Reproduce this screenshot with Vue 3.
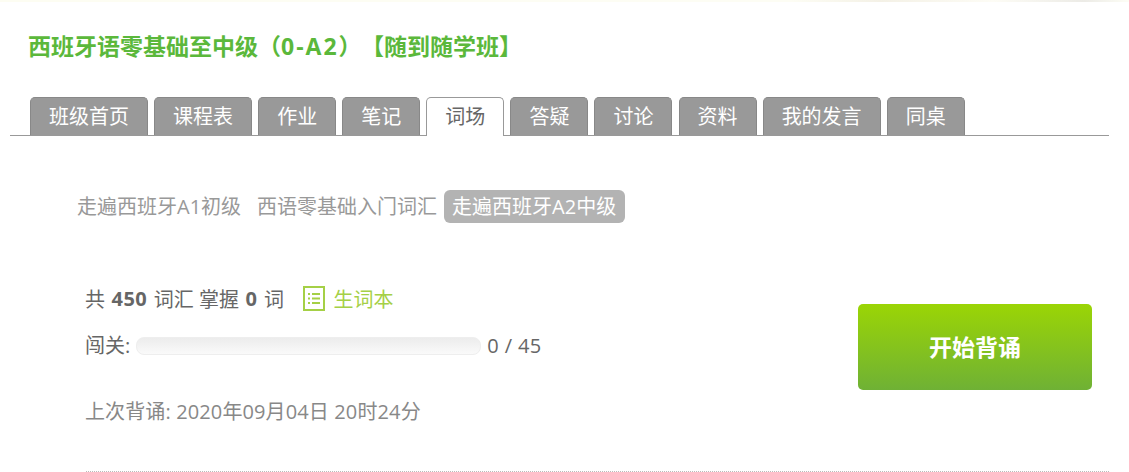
<template>
  <div class="page">
    <div class="top-strip"></div>
    <h1 class="title">西班牙语零基础至中级（<span class="latin">0-A2</span><span class="paren-end">）</span>【随到随学班】</h1>

    <ul class="tabs">
      <li
        v-for="tab in tabs"
        :key="tab"
        class="tab"
        :class="{ active: tab === currentTab }"
      >{{ tab }}</li>
    </ul>

    <div class="books">
      <span
        v-for="book in books"
        :key="book"
        class="book"
        :class="{ active: book === currentBook }"
      >{{ book }}</span>
    </div>

    <div class="summary">
      <div class="info">
        <div class="counts">
          共 <b>450</b> 词汇 掌握 <b>0</b> 词
          <a class="wordbook">
            <svg width="22" height="25" viewBox="0 0 22 25">
              <rect x="1" y="1" width="20" height="23" fill="#fff" stroke="#a5d046" stroke-width="2" />
              <path d="M5 8h2M9 8h8M5 12.5h2M9 12.5h8M5 17h2M9 17h8" stroke="#a5d046" stroke-width="2" fill="none" />
            </svg>
            生词本
          </a>
        </div>
        <div class="progress-row">
          <span>闯关:</span>
          <div class="progress"></div>
          <span class="progress-num">0 / 45</span>
        </div>
        <div class="last">上次背诵: 2020年09月04日 20时24分</div>
      </div>
      <button class="start">开始背诵</button>
    </div>
    <div class="divider"></div>
  </div>
</template>

<script setup>
const tabs = ['班级首页', '课程表', '作业', '笔记', '词场', '答疑', '讨论', '资料', '我的发言', '同桌']
const currentTab = '词场'
const books = ['走遍西班牙A1初级', '西语零基础入门词汇', '走遍西班牙A2中级']
const currentBook = '走遍西班牙A2中级'
</script>

<style>
html, body {
  margin: 0;
  background: #fff;
  overflow: hidden;
}
</style>

<style scoped>
.page {
  height: 472px;
  overflow: hidden;
  font-family: "Open Sans", "Noto Sans CJK SC", sans-serif;
  color: #666;
}

.top-strip {
  height: 2px;
  background: linear-gradient(90deg, #fdfdf2 0%, #fdfdf4 70%, #f4f1e6 78%, #fdfcf5 88%, #ecebe6 96%, #fdfdf5 100%);
}

.title {
  margin: 29px 0 0 28px;
  font-size: 23px;
  line-height: 30px;
  font-weight: 700;
  color: #5bb83b;
}

.latin {
  letter-spacing: 2px;
}

.paren-end {
  margin-right: 11px;
}

.tabs {
  display: flex;
  gap: 6.09px;
  list-style: none;
  margin: 36px 20px 0 10px;
  padding: 0 0 0 20px;
  border-bottom: 1px solid #999;
  height: 38px;
}

.tab {
  box-sizing: border-box;
  height: 38px;
  padding: 0 18px;
  line-height: 37px;
  font-size: 20px;
  color: #fff;
  background: #999;
  border: 1px solid #888;
  border-bottom: none;
  border-radius: 5px 5px 0 0;
}

.tab.active {
  height: 39px;
  background: #fff;
  color: #666;
  border-color: #999;
}

.books {
  display: flex;
  align-items: center;
  margin: 54px 0 0 69px;
  font-size: 20px;
  color: #999;
}

.book {
  padding: 0 8px;
  line-height: 33px;
  border-radius: 6px;
}

.book + .book.active {
  margin-left: -1px;
}

.book.active {
  padding-right: 9px;
  background: #b3b3b3;
  color: #fff;
}

.summary {
  display: flex;
  justify-content: space-between;
  margin: 62px 37px 0 85px;
}

.info {
  font-size: 20px;
}

.counts {
  display: flex;
  align-items: center;
  gap: 0 6.5px;
  height: 26px;
}

.counts b {
  font-weight: 700;
  letter-spacing: 0.5px;
}

.wordbook {
  display: flex;
  align-items: center;
  gap: 8px;
  margin-left: 13px;
  color: #a5d046;
}

.progress-row {
  display: flex;
  align-items: center;
  gap: 6px;
  margin-top: 22px;
  line-height: 26px;
}

.progress {
  box-sizing: border-box;
  width: 345px;
  height: 18px;
  border: 1px solid #eee;
  border-radius: 8px;
  background: linear-gradient(#ececec, #fafafa);
}

.progress-num {
  letter-spacing: 0.4px;
}

.last {
  margin-top: 40px;
  line-height: 26px;
  letter-spacing: 0.12px;
  color: #888;
}

.start {
  width: 234px;
  height: 86px;
  margin-top: 19px;
  padding-bottom: 3px;
  border: none;
  border-radius: 5px;
  background: linear-gradient(#9bd505, #6fb135);
  color: #fff;
  font: 700 23px "Open Sans", "Noto Sans CJK SC", sans-serif;
}

.divider {
  margin: 46px 20px 0 86px;
  border-top: 1px dotted #bbb;
}
</style>
